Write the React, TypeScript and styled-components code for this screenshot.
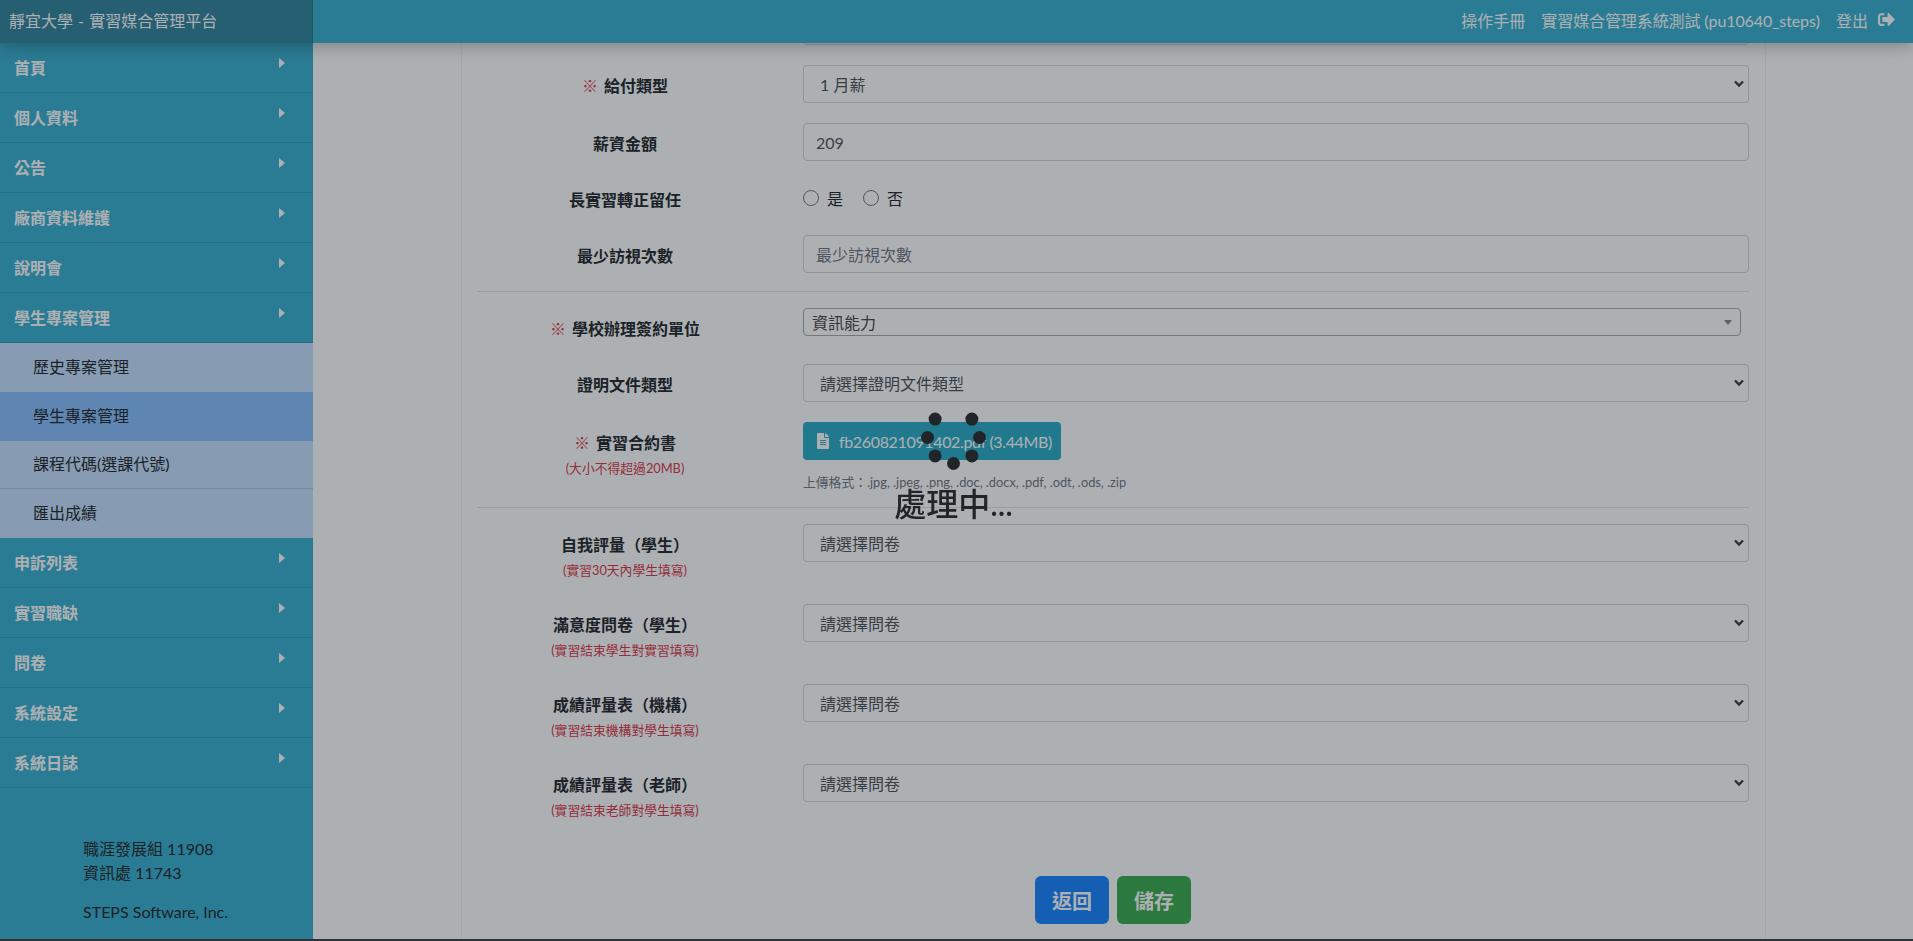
import React from 'react';
import styled, { createGlobalStyle } from 'styled-components';
import { FaFileAlt, FaSignOutAlt } from 'react-icons/fa';

const GlobalStyle = createGlobalStyle`
  html, body {
    margin: 0;
    padding: 0;
    background: #3a3f42;
    overflow: hidden;
  }
  * {
    box-sizing: border-box;
  }
  body, input, select, button {
    font-family: Lato, "Noto Sans CJK TC", sans-serif;
  }
`

const Shell = styled.div`
  height: 939px;
  display: flex;
  flex-direction: column;
  overflow: hidden;
  background: #fff;
`

const Header = styled.header`
  position: relative;
  z-index: 2;
  flex: 0 0 43px;
  display: flex;
  align-items: center;
  background: #37afcf;
  color: #fff;
  box-shadow: 0 2px 18px rgba(0, 0, 0, 0.3);
`

const Brand = styled.div`
  flex: 0 0 313px;
  height: 43px;
  display: flex;
  align-items: center;
  padding: 0 0 4px 9px;
  font-size: 16px;
  word-spacing: 1px;
  background: #30829b;
  border-right: 1px solid #277086;
`

const HeaderLinks = styled.nav`
  margin-left: auto;
  padding: 0 18px 4px 0;
  display: flex;
  align-items: center;
  gap: 16px;
  font-size: 16px;
`

const UserName = styled.span`
  letter-spacing: -0.1px;
`

const Logout = styled.span`
  display: flex;
  align-items: center;
  gap: 10px;
`

const Body = styled.div`
  flex: 1;
  min-height: 0;
  display: flex;
`

const Sidebar = styled.aside`
  flex: 0 0 313px;
  background: #37afcf;
`

const NavItem = styled.div`
  height: 50px;
  display: flex;
  align-items: center;
  justify-content: space-between;
  padding: 0 28px 2px 14px;
  font-size: 16px;
  font-weight: 700;
  color: #fff;
  border-bottom: 1px solid #2f9ab8;
`

const Caret = styled.span`
  margin-bottom: 7px;
  border-left: 6px solid #fff;
  border-top: 5px solid transparent;
  border-bottom: 5px solid transparent;
`

const SubItem = styled.div<{ $active?: boolean; $line?: boolean }>`
  height: 48.75px;
  display: flex;
  align-items: center;
  padding: 0 0 2px 33px;
  font-size: 16px;
  color: #212529;
  background: ${p => (p.$active ? '#87bfff' : '#c5e1ff')};
  border-bottom: 1px solid ${p => (p.$line ? '#a9c2de' : 'transparent')};
`

const SideFooter = styled.div`
  margin-top: 49px;
  padding-left: 83px;
  font-size: 16px;
  line-height: 24px;
  color: #212529;

  p {
    margin: 0;
  }

  p:last-child {
    margin-top: 15px;
  }
`

const Main = styled.main`
  flex: 1;
  min-width: 0;
  overflow: hidden;
`

const Card = styled.div`
  width: 1305px;
  height: 1000px;
  margin-left: 148px;
  padding: 0 16px 0 15px;
  border-left: 1px solid #f0f0f0;
  border-right: 1px solid #f0f0f0;
`

const Row = styled.div<{ $gap?: number; $pull?: number }>`
  display: grid;
  grid-template-columns: 296px 946px;
  column-gap: 30px;
  align-items: start;
  margin-top: ${p => p.$pull || 0}px;
  margin-bottom: ${p => (p.$gap === undefined ? 20 : p.$gap)}px;
`

const Label = styled.div<{ $top?: number }>`
  padding-top: ${p => (p.$top === undefined ? 9 : p.$top)}px;
  text-align: center;
  font-size: 16px;
  line-height: 24px;
  font-weight: 700;
  color: #212529;
`

const Required = styled.span`
  margin-right: 6px;
  font-weight: 400;
  color: #dc3545;
`

const Note = styled.small`
  display: block;
  margin-top: 3px;
  font-size: 12.8px;
  line-height: 20px;
  font-weight: 400;
  color: #dc3545;
`

const TextInput = styled.input`
  display: block;
  width: 100%;
  height: 38px;
  padding: 0 12px;
  font-size: 16px;
  color: #495057;
  background: #fff;
  border: 1px solid #ced4da;
  border-radius: 4px;

  &::placeholder {
    color: #6c757d;
    opacity: 1;
  }
`

const Select = styled.select`
  display: block;
  width: 100%;
  height: 38px;
  padding: 0 30px 0 16px;
  font-size: 16px;
  color: #495057;
  border: 1px solid #ced4da;
  border-radius: 4px;
  appearance: none;
  background: #fff url("data:image/svg+xml,%3Csvg xmlns='http://www.w3.org/2000/svg' width='10' height='8' viewBox='0 0 10 8'%3E%3Cpath d='M1 1.5l4 4 4-4' fill='none' stroke='%23343a40' stroke-width='2.4'/%3E%3C/svg%3E") no-repeat right 4px center;
`

const RadioRow = styled.div`
  height: 33px;
  display: flex;
  align-items: center;
  gap: 20px;
`

const RadioLabel = styled.label`
  display: flex;
  align-items: center;
  gap: 8px;
  font-size: 16px;
  color: #212529;
`

const RadioDot = styled.span`
  width: 16px;
  height: 16px;
  border: 1px solid #6f7679;
  border-radius: 50%;
  background: #fff;
`

const Divider = styled.hr`
  margin: 0 0 16px;
  height: 1px;
  border: 0;
  background: #dee2e6;
`

const ChosenBox = styled.div`
  width: 938px;
  height: 28px;
  display: flex;
  align-items: center;
  justify-content: space-between;
  padding: 0 8px;
  font-size: 16px;
  color: #444;
  background: #fff;
  border: 1.5px solid #aaa;
  border-radius: 4px;
`

const ChosenArrow = styled.span`
  border-top: 5px solid #888;
  border-left: 4px solid transparent;
  border-right: 4px solid transparent;
`

const FileButton = styled.div`
  width: 258px;
  height: 38px;
  display: flex;
  align-items: center;
  gap: 8px;
  padding-left: 12px;
  font-size: 16px;
  letter-spacing: -0.35px;
  white-space: nowrap;
  color: #fff;
  background: #29abc5;
  border-radius: 4px;
`

const Hint = styled.div`
  margin-top: 13px;
  font-size: 12.8px;
  line-height: 18px;
  color: #6c757d;
`

const Actions = styled.div`
  margin-top: 56px;
  display: flex;
  justify-content: center;
  gap: 8px;
`

const ActionButton = styled.button<{ $tone: string }>`
  width: 74px;
  height: 48px;
  padding: 0;
  font-size: 20px;
  font-weight: 700;
  color: #fff;
  background: ${p => p.$tone};
  border: 0;
  border-radius: 6px;
`

const Overlay = styled.div`
  position: fixed;
  inset: 0;
  z-index: 10;
  background: rgba(20, 30, 38, 0.35);
`

const Loader = styled.div`
  position: absolute;
  left: 953.5px;
  top: 405px;
  width: 160px;
  margin-left: -80px;
  display: flex;
  flex-direction: column;
  align-items: center;
`

const Spinner = styled.div`
  position: relative;
  width: 64px;
  height: 64px;
`

const Dot = styled.span<{ $angle: number }>`
  position: absolute;
  left: 25.5px;
  top: 25.5px;
  width: 13px;
  height: 13px;
  border-radius: 50%;
  background: #212529;
  transform: rotate(${p => p.$angle}deg) translateY(-26px);
`

const LoaderText = styled.div`
  margin-top: 15px;
  font-size: 32px;
  line-height: 40px;
  font-weight: 500;
  color: #212529;
`

const navTop = ['首頁', '個人資料', '公告', '廠商資料維護', '說明會', '學生專案管理']
const navBottom = ['申訴列表', '實習職缺', '問卷', '系統設定', '系統日誌']
const surveys = [
  { title: '自我評量（學生）', note: '(實習30天內學生填寫)' },
  { title: '滿意度問卷（學生）', note: '(實習結束學生對實習填寫)' },
  { title: '成績評量表（機構）', note: '(實習結束機構對學生填寫)' },
  { title: '成績評量表（老師）', note: '(實習結束老師對學生填寫)' },
]
const dotAngles = [45, 90, 135, 180, 225, 270, 315]

const App = () => {
  return (
    <>
      <GlobalStyle />
      <Shell>
        <Header>
          <Brand>靜宜大學 - 實習媒合管理平台</Brand>
          <HeaderLinks>
            <span>操作手冊</span>
            <UserName>實習媒合管理系統測試 (pu10640_steps)</UserName>
            <Logout>
              登出 <FaSignOutAlt size={17} />
            </Logout>
          </HeaderLinks>
        </Header>
        <Body>
          <Sidebar>
            {navTop.map(name => (
              <NavItem key={name}>
                {name}
                <Caret />
              </NavItem>
            ))}
            <SubItem>歷史專案管理</SubItem>
            <SubItem $active>學生專案管理</SubItem>
            <SubItem $line>課程代碼(選課代號)</SubItem>
            <SubItem>匯出成績</SubItem>
            {navBottom.map(name => (
              <NavItem key={name}>
                {name}
                <Caret />
              </NavItem>
            ))}
            <SideFooter>
              <p>職涯發展組 11908</p>
              <p>資訊處 11743</p>
              <p>STEPS Software, Inc.</p>
            </SideFooter>
          </Sidebar>
          <Main>
            <Card>
              <Row $pull={-36}>
                <div />
                <TextInput readOnly />
              </Row>
              <Row>
                <Label>
                  <Required>※</Required>給付類型
                </Label>
                <Select defaultValue="1">
                  <option value="1">1 月薪</option>
                </Select>
              </Row>
              <Row>
                <Label>薪資金額</Label>
                <TextInput defaultValue="209" readOnly />
              </Row>
              <Row $gap={21}>
                <Label $top={7}>長實習轉正留任</Label>
                <RadioRow>
                  <RadioLabel>
                    <RadioDot />是
                  </RadioLabel>
                  <RadioLabel>
                    <RadioDot />否
                  </RadioLabel>
                </RadioRow>
              </Row>
              <Row $gap={18}>
                <Label>最少訪視次數</Label>
                <TextInput placeholder="最少訪視次數" readOnly />
              </Row>
              <Divider />
              <Row $gap={23}>
                <Label>
                  <Required>※</Required>學校辦理簽約單位
                </Label>
                <ChosenBox>
                  資訊能力
                  <ChosenArrow />
                </ChosenBox>
              </Row>
              <Row>
                <Label>證明文件類型</Label>
                <Select defaultValue="">
                  <option value="">請選擇證明文件類型</option>
                </Select>
              </Row>
              <Row $gap={16}>
                <Label>
                  <Required>※</Required>實習合約書
                  <Note>(大小不得超過20MB)</Note>
                </Label>
                <div>
                  <FileButton>
                    <FaFileAlt size={16} />
                    fb260821091402.pdf (3.44MB)
                  </FileButton>
                  <Hint>上傳格式：.jpg, .jpeg, .png, .doc, .docx, .pdf, .odt, .ods, .zip</Hint>
                </div>
              </Row>
              <Divider />
              {surveys.map(item => (
                <Row key={item.title} $gap={24}>
                  <Label>
                    {item.title}
                    <Note>{item.note}</Note>
                  </Label>
                  <Select defaultValue="">
                    <option value="">請選擇問卷</option>
                  </Select>
                </Row>
              ))}
              <Actions>
                <ActionButton $tone="#1583ff">返回</ActionButton>
                <ActionButton $tone="#39ab4e">儲存</ActionButton>
              </Actions>
            </Card>
          </Main>
        </Body>
      </Shell>
      <Overlay>
        <Loader>
          <Spinner>
            {dotAngles.map(angle => (
              <Dot key={angle} $angle={angle} />
            ))}
          </Spinner>
          <LoaderText>處理中...</LoaderText>
        </Loader>
      </Overlay>
    </>
  );
};

export default App;
